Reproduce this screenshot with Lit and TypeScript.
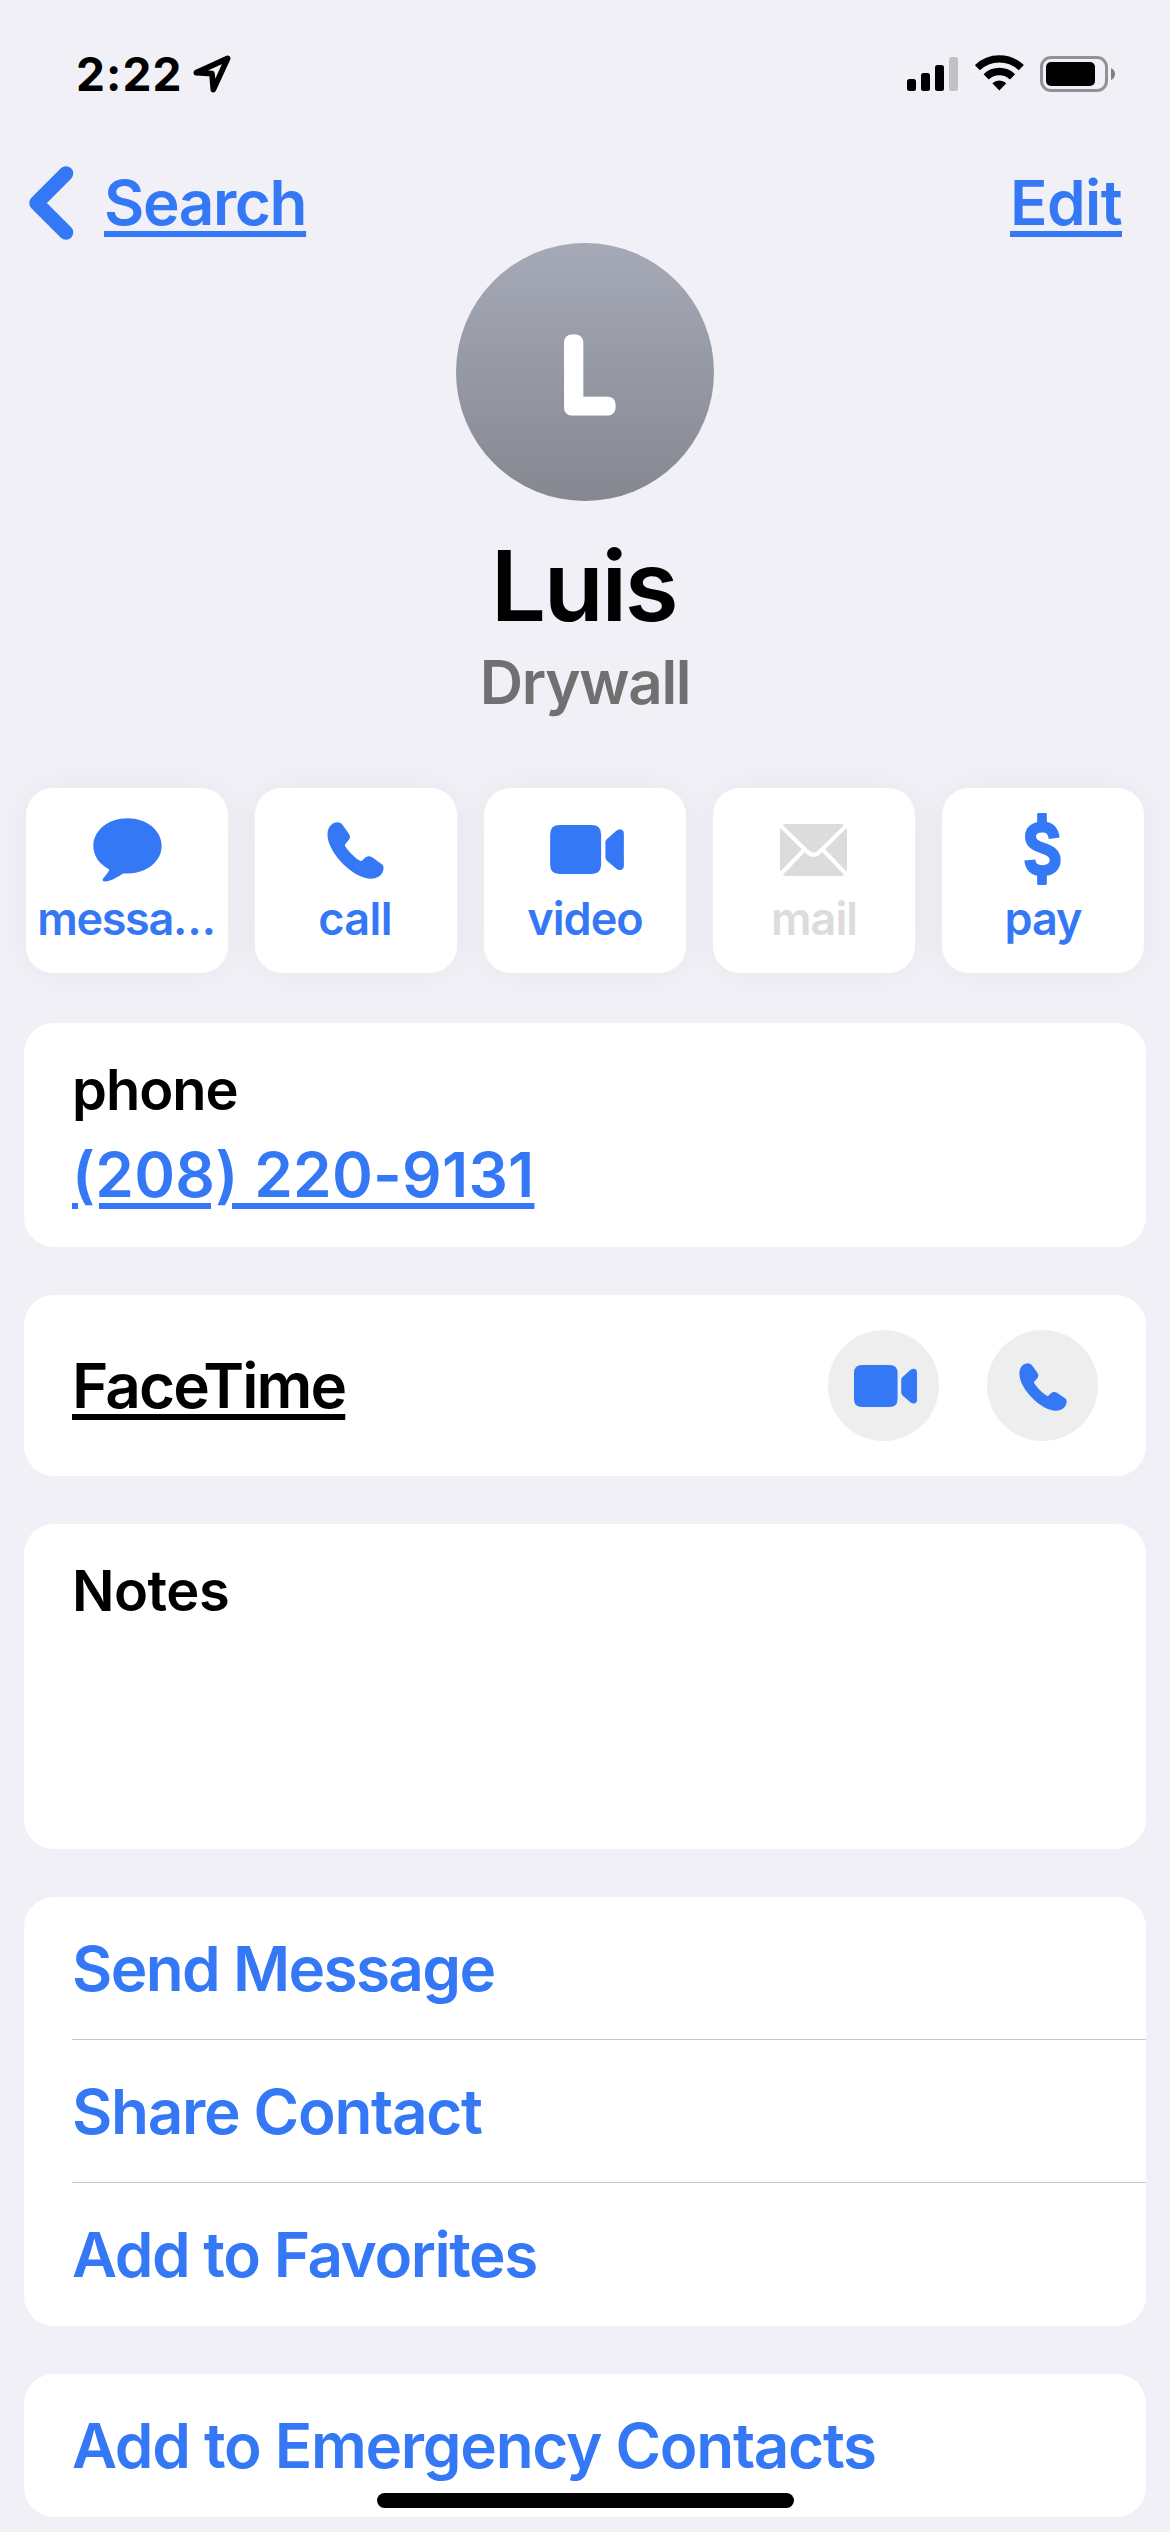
import { LitElement, html, css } from "lit";
import { customElement, property } from "lit/decorators.js";

const phoneIcon = html`<svg class="glyph" viewBox="980 157 170 171" fill="currentColor">
  <path d="M981 195C981 172 995 158 1011 158C1018 158 1023 161 1027 167L1045 192C1050 199 1050 205 1044 212L1035 222C1032 225 1033 228 1035 231C1045 246 1062 263 1076 272C1080 275 1083 275 1086 272L1092 266C1099 259 1107 258 1115 263L1142 282C1148 286 1150 290 1149 297C1148 314 1132 327 1111 327C1060 327 981 250 981 195Z" />
</svg>`;

const videoIcon = html`<svg class="glyph" viewBox="192 256 188 125" fill="currentColor">
  <path d="M216 256H298Q322 256 322 280V357Q322 381 298 381H216Q192 381 192 357V280Q192 256 216 256Z" />
  <path d="M333 300Q333 296 337 292L360 271Q365 267 370 267Q380 268 380 278V360Q380 370 370 371Q365 371 360 367L337 347Q333 343 333 339Z" />
</svg>`;

const messageIcon = html`<svg class="glyph" viewBox="275 144 209 193" fill="currentColor">
  <path d="M379 144C438 144 483 181 483 228C483 275 438 312 379 312C374 312 370 311 366 312C352 321 331 336 311 336C304 336 302 331 306 326C313 318 320 310 324 302C325 300 324 299 322 298C293 283 276 258 276 228C276 181 321 144 379 144Z" />
</svg>`;

const mailIcon = html`<svg class="glyph" viewBox="0 0 67 52">
  <rect width="67" height="52" rx="6" fill="currentColor" />
  <g fill="none" stroke="#fff" stroke-width="4">
    <path d="M-1 0L27 27.5Q33.500 34 40 27.500L68 0" />
    <path d="M-1 52L24 26M68 52L43 26" />
  </g>
</svg>`;

const payIcon = html`<svg class="glyph" viewBox="42 39 110 216" fill="currentColor">
  <rect x="81" y="39" width="29" height="36" rx="4" />
  <rect x="81" y="219" width="29" height="36" rx="4" />
  <path d="M132 115C129 93 119 81 97 81C74 81 61 92 61 110C61 129 76 137 97 144C120 152 135 160 135 181C135 201 120 212 97 212C74 212 61 202 59 180" fill="none" stroke="currentColor" stroke-width="33" />
</svg>`;

const icons: Record<string, unknown> = {
  message: messageIcon,
  call: phoneIcon,
  video: videoIcon,
  mail: mailIcon,
  pay: payIcon,
};

@customElement("status-bar")
export class StatusBar extends LitElement {
  static styles = css`
    :host {
      display: flex;
      align-items: center;
      justify-content: space-between;
      height: 148px;
      padding: 0 55px 0 76px;
    }
    .left,
    .right {
      display: flex;
      align-items: center;
    }
    .time {
      font-size: 46px;
      font-weight: 700;
      line-height: 56px;
      letter-spacing: 1.1px;
    }
    .arrow {
      width: 38px;
      height: 38px;
      margin-left: 10px;
    }
    .right {
      gap: 16px;
    }
    .signal {
      width: 51px;
      height: 34px;
      margin-right: 1px;
    }
    .wifi {
      width: 49px;
      height: 36px;
      margin-top: -2px;
    }
    .battery {
      width: 75px;
      height: 36px;
    }
  `;

  render() {
    return html`
      <div class="left">
        <span class="time">2:22</span>
        <svg class="arrow" viewBox="580 77 114 114">
          <path d="M590 130L684 87L641 181L637 133Z" fill="none" stroke="#000" stroke-width="17" stroke-linejoin="round" />
        </svg>
      </div>
      <div class="right">
        <svg class="signal" viewBox="0 0 51 34">
          <rect x="0" y="22" width="9" height="12" rx="2.500" />
          <rect x="14" y="16" width="9" height="18" rx="2.500" />
          <rect x="28" y="8" width="9" height="26" rx="2.500" />
          <rect x="42" y="0" width="9" height="34" rx="2.500" fill="#c1c1c6" />
        </svg>
        <svg class="wifi" viewBox="344 76 147 107">
          <g fill="none" stroke="#000" stroke-width="22">
            <path d="M351 113.700A95 95 0 0 1 483 113.700" />
            <path d="M377.400 141A57 57 0 0 1 456.600 141" />
          </g>
          <path d="M417 182L396 160A31 31 0 0 1 438 160Z" />
        </svg>
        <svg class="battery" viewBox="0 0 75 36">
          <rect x="1.500" y="1.500" width="65" height="33" rx="9.500" fill="none" stroke="#929195" stroke-width="3" />
          <rect x="6" y="6" width="49" height="24" rx="5" />
          <path d="M71 12Q75 14 75 18Q75 22 71 24Z" fill="#818185" />
        </svg>
      </div>
    `;
  }
}

@customElement("action-tile")
export class ActionTile extends LitElement {
  @property() icon = "";
  @property() label = "";

  static styles = css`
    :host {
      display: flex;
      flex-direction: column;
      align-items: center;
      box-sizing: border-box;
      width: 204px;
      height: 187px;
      padding-top: 25px;
      border: 1px solid #eeeeef;
      border-radius: 28px;
      background: #fff;
      color: #3478f6;
      box-shadow: 0 0 36px rgba(0, 0, 0, 0.045);
    }
    :host([disabled]) {
      color: #dcdcdc;
    }
    .slot {
      display: flex;
      align-items: center;
      justify-content: center;
      height: 72px;
    }
    .glyph {
      display: block;
    }
    .message .glyph { width: 69px; height: 64px; margin-top: 2px; }
    .call .glyph { width: 57px; height: 57px; margin: 3px 2px 0 0; }
    .video .glyph { width: 74px; height: 49px; margin: 1px 0 0 4px; }
    .mail .glyph { width: 67px; height: 52px; margin: 2px 2px 0 0; }
    .pay .glyph { width: 37px; height: 72px; margin-right: 2px; }
    .label {
      margin-top: 6px;
      font-size: 45px;
      line-height: 55px;
      letter-spacing: -1px;
      white-space: nowrap;
    }
    .message + .label {
      margin-right: 2px;
      letter-spacing: -1.3px;
    }
    .call + .label {
      margin-right: 2px;
      letter-spacing: -0.6px;
    }
  `;

  render() {
    return html`
      <div class="slot ${this.icon}">${icons[this.icon]}</div>
      <span class="label">${this.label}</span>
    `;
  }
}

@customElement("app-root")
export class AppRoot extends LitElement {
  static styles = css`
    :host {
      display: block;
      position: relative;
      width: 1170px;
      height: 2532px;
      overflow: hidden;
      background: #f1f0f6;
      color: #000;
      font-family: Inter, "Liberation Sans", sans-serif;
      font-size: 62px;
      font-weight: 580;
      line-height: 76px;
    }
    .nav {
      display: flex;
      align-items: center;
      justify-content: space-between;
      box-sizing: border-box;
      height: 82px;
      margin-top: 13px;
      padding: 1px 48px 0 28px;
      color: #3478f6;
    }
    .back {
      display: flex;
      align-items: center;
      gap: 30px;
      letter-spacing: -1.4px;
    }
    .chevron {
      width: 46px;
      height: 74px;
      margin-top: 1px;
    }
    .edit {
      letter-spacing: -0.6px;
    }
    .link {
      text-decoration: underline;
      text-decoration-thickness: 6px;
      text-underline-offset: 6px;
    }
    .blue {
      color: #3478f6;
    }
    .profile {
      display: flex;
      flex-direction: column;
      align-items: center;
    }
    .avatar {
      width: 258px;
      height: 258px;
      border-radius: 50%;
      background: linear-gradient(#a6aab7, #858890);
    }
    .initial {
      font-size: 91px;
      font-weight: 200;
    }
    .name {
      margin: 24px 3px 0 0;
      font-size: 98px;
      line-height: 121px;
      letter-spacing: -2.3px;
    }
    .job {
      color: #707070;
      font-size: 60px;
      line-height: 72px;
      letter-spacing: -1.3px;
    }
    .actions {
      display: flex;
      gap: 25px;
      margin: 69px 25px 0;
    }
    .cards {
      display: flex;
      flex-direction: column;
      gap: 48px;
      margin: 49px 24px 0;
    }
    .card {
      box-sizing: border-box;
      padding: 0 48px;
      border-radius: 30px;
      background: #fff;
    }
    .phone {
      height: 224px;
      padding-top: 33px;
    }
    .caption {
      font-size: 56px;
      line-height: 68px;
      letter-spacing: -1px;
    }
    .notes .caption {
      letter-spacing: -0.5px;
    }
    .number {
      margin-top: 13px;
      letter-spacing: 0.2px;
    }
    .facetime {
      display: flex;
      align-items: center;
      justify-content: space-between;
      height: 181px;
      letter-spacing: -1.9px;
    }
    .round-buttons {
      display: flex;
      gap: 48px;
    }
    .round {
      display: flex;
      align-items: center;
      justify-content: center;
      width: 111px;
      height: 111px;
      border-radius: 50%;
      background: #eee;
      color: #3478f6;
    }
    .round .glyph { width: 48px; height: 48px; margin-top: 3px; }
    .round.cam .glyph { width: 63px; height: 42px; margin: 1px 0 0 4px; }
    .notes {
      height: 325px;
      padding-top: 33px;
    }
    .list {
      padding-right: 0;
      color: #3478f6;
      letter-spacing: -1.3px;
    }
    .row {
      display: flex;
      align-items: center;
      box-sizing: border-box;
      height: 143px;
    }
    .row + .row {
      box-shadow: 0 -1px 0 #c6c6c8;
    }
    .send {
      letter-spacing: -1.65px;
    }
    .favorites {
      letter-spacing: -1.45px;
    }
    .home {
      position: absolute;
      left: 377px;
      bottom: 24px;
      width: 417px;
      height: 15px;
      border-radius: 8px;
      background: #000;
    }
  `;

  render() {
    return html`
      <status-bar></status-bar>
      <div class="nav">
        <div class="back">
          <svg class="chevron" viewBox="0 0 46 74">
            <path d="M38 7.500L8.500 37L38 66.500" fill="none" stroke="#3478f6" stroke-width="14.500" stroke-linecap="round" stroke-linejoin="round" />
          </svg>
          <span class="link">Search</span>
        </div>
        <span class="link edit">Edit</span>
      </div>
      <div class="profile">
        <svg class="avatar" viewBox="0 0 258 258">
          <text class="initial" x="106" y="164.500" fill="#fff" stroke="#fff" stroke-width="15" stroke-linejoin="round">L</text>
        </svg>
        <div class="name">Luis</div>
        <div class="job">Drywall</div>
      </div>
      <div class="actions">
        <action-tile icon="message" label="messa…"></action-tile>
        <action-tile icon="call" label="call"></action-tile>
        <action-tile icon="video" label="video"></action-tile>
        <action-tile icon="mail" label="mail" disabled></action-tile>
        <action-tile icon="pay" label="pay"></action-tile>
      </div>
      <div class="cards">
        <div class="card phone">
          <div class="caption">phone</div>
          <div class="number"><span class="link blue">(208) 220-9131</span></div>
        </div>
        <div class="card facetime">
          <span class="link">FaceTime</span>
          <div class="round-buttons">
            <div class="round cam">${videoIcon}</div>
            <div class="round">${phoneIcon}</div>
          </div>
        </div>
        <div class="card notes"><div class="caption">Notes</div></div>
        <div class="card list">
          <div class="row send">Send Message</div>
          <div class="row">Share Contact</div>
          <div class="row favorites">Add to Favorites</div>
        </div>
        <div class="card list">
          <div class="row">Add to Emergency Contacts</div>
        </div>
      </div>
      <div class="home"></div>
    `;
  }
}
